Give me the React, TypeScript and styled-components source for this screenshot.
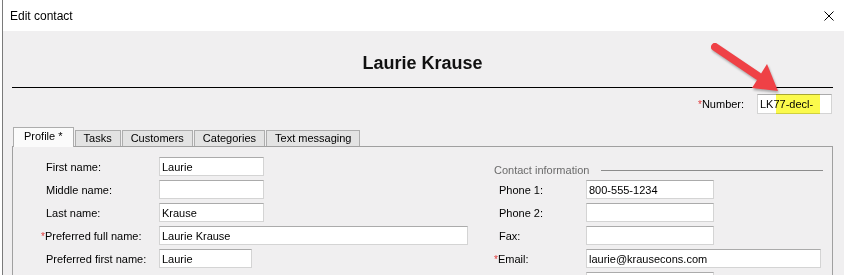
import * as React from 'react';
import styled, { createGlobalStyle } from 'styled-components';

const GlobalStyle = createGlobalStyle`
  html, body {
    margin: 0;
    padding: 0;
    height: 275px;
    overflow: hidden;
    background: #fff;
  }
  body {
    font-family: "Liberation Sans", Arial, sans-serif;
  }
`;

const Window = styled.div`
  position: relative;
  box-sizing: border-box;
  margin-left: 2px;
  width: 842px;
  height: 275px;
  border-left: 1px solid #7a7a7a;
  display: flex;
  flex-direction: column;
  overflow: hidden;
`;

const TitleBar = styled.div`
  height: 31px;
  flex-shrink: 0;
  background: #fff;
  display: flex;
  align-items: center;
  justify-content: space-between;
  padding: 0 10px 0 7px;
  font-size: 12px;
  color: #000;
`;

const Body = styled.div`
  flex: 1;
  min-height: 0;
  background: #f0eff0;
  padding: 0 11px 0 9px;
  display: flex;
  flex-direction: column;
  overflow: hidden;

  & > * {
    flex-shrink: 0;
  }
`;

const Header = styled.div`
  height: 56px;
  box-sizing: border-box;
  padding-top: 8px;
  display: flex;
  align-items: center;
  justify-content: center;
`;

const ContactName = styled.h1`
  margin: 0;
  font-size: 18px;
  line-height: 22px;
  font-weight: bold;
  color: #111;
`;

const Rule = styled.div`
  border-top: 1px solid #000;
`;

const NumberRow = styled.div`
  display: flex;
  justify-content: flex-end;
  align-items: center;
  gap: 12px;
  height: 20px;
  margin-top: 6px;
  margin-right: 1px;
`;

const NumberBox = styled.div`
  position: relative;
  height: 20px;
`;

const Highlight = styled.div`
  position: absolute;
  left: 19px;
  top: 0;
  bottom: 0;
  width: 44px;
  background: #fbfa4c;
  mix-blend-mode: multiply;
  pointer-events: none;
`;

const TabStrip = styled.div`
  position: relative;
  z-index: 1;
  display: flex;
  align-items: flex-end;
  gap: 1px;
  height: 20px;
  margin-top: 13px;
  margin-bottom: -1px;
  padding-left: 1px;
`;

const Tab = styled.div<{ $active?: boolean }>`
  box-sizing: border-box;
  border: 1px solid #adadad;
  border-bottom: none;
  font-size: 11px;
  color: #000;
  white-space: nowrap;
  height: ${(p) => (p.$active ? '20px' : '16px')};
  line-height: ${(p) => (p.$active ? '14px' : '15px')};
  padding: ${(p) => (p.$active ? '1px 10px 0' : '0 8px')};
  margin-bottom: ${(p) => (p.$active ? '0' : '1px')};
  background: ${(p) => (p.$active ? '#fbfbfb' : '#e3e3e3')};
`;

const Panel = styled.div`
  flex: 1 0 auto;
  border: 1px solid #a0a0a0;
  border-bottom: none;
  display: grid;
  grid-template-columns: 448px 1fr;
  align-items: start;
  padding: 10px 0 0 33px;
`;

const Column = styled.div`
  display: flex;
  flex-direction: column;
`;

const SectionHeading = styled.div`
  display: flex;
  align-items: center;
  height: 19px;
  box-sizing: border-box;
  padding-top: 7px;
  margin-bottom: 4px;
  margin-right: 9px;
  font-size: 11px;
  color: #6b6b6b;
`;

const HeadingLine = styled.div`
  flex: 1;
  margin-left: 12px;
  border-top: 1px solid #8c8c8c;
`;

const Row = styled.div<{ $indent?: number }>`
  display: flex;
  align-items: center;
  height: 19px;
  margin-bottom: 4px;
  padding-left: ${(p) => p.$indent ?? 0}px;
`;

const Label = styled.label<{ $width: number }>`
  width: ${(p) => p.$width}px;
  flex-shrink: 0;
  font-size: 11px;
  color: #000;
  white-space: nowrap;
`;

const Required = styled.span`
  color: #e03a3a;
  margin-left: -5px;
  font-size: 10px;
`;

const TextBox = styled.input<{ $width: number }>`
  box-sizing: border-box;
  width: ${(p) => p.$width}px;
  height: 19px;
  margin: 0;
  padding: 0 2px;
  border: 1px solid #d4d4d4;
  border-top-color: #ababab;
  background: #fff;
  font-family: "Liberation Sans", Arial, sans-serif;
  font-size: 11px;
  color: #000;
  outline: none;
`;

const NumberInput = styled(TextBox)`
  height: 20px;
`;

const Arrow = styled.svg`
  position: absolute;
  left: 697px;
  top: 38px;
  overflow: visible;
  filter: drop-shadow(1px 2px 1px rgba(0, 0, 0, 0.3));
  pointer-events: none;
`;

const CloseIcon = () => (
  <svg width="10" height="10" viewBox="0 0 10 10">
    <path d="M0.5 0.5 L9.5 9.5 M9.5 0.5 L0.5 9.5" stroke="#000" strokeWidth="1" fill="none" />
  </svg>
);

type Field = { label: string; value: string; width: number; required?: boolean };

const profileFields: Field[] = [
  { label: 'First name:', value: 'Laurie', width: 105 },
  { label: 'Middle name:', value: '', width: 105 },
  { label: 'Last name:', value: 'Krause', width: 105 },
  { label: 'Preferred full name:', value: 'Laurie Krause', width: 309, required: true },
  { label: 'Preferred first name:', value: 'Laurie', width: 93 },
];

const contactFields: Field[] = [
  { label: 'Phone 1:', value: '800-555-1234', width: 128 },
  { label: 'Phone 2:', value: '', width: 128 },
  { label: 'Fax:', value: '', width: 128 },
  { label: 'Email:', value: 'laurie@krausecons.com', width: 235, required: true },
  { label: '', value: '', width: 128 },
];

const tabs = ['Profile *', 'Tasks', 'Customers', 'Categories', 'Text messaging'];

export default function App() {
  return (
    <>
      <GlobalStyle />
      <Window>
        <TitleBar>
          <span>Edit contact</span>
          <CloseIcon />
        </TitleBar>
        <Body>
          <Header>
            <ContactName>Laurie Krause</ContactName>
          </Header>
          <Rule />
          <NumberRow>
            <Label $width={42}>
              <Required>*</Required>Number:
            </Label>
            <NumberBox>
              <NumberInput $width={75} value="LK77-decl-" readOnly />
              <Highlight />
            </NumberBox>
          </NumberRow>
          <TabStrip>
            {tabs.map((t, i) => (
              <Tab key={t} $active={i === 0}>
                {t}
              </Tab>
            ))}
          </TabStrip>
          <Panel>
            <Column>
              {profileFields.map((f) => (
                <Row key={f.label}>
                  <Label $width={113}>
                    {f.required && <Required>*</Required>}
                    {f.label}
                  </Label>
                  <TextBox $width={f.width} value={f.value} readOnly />
                </Row>
              ))}
            </Column>
            <Column>
              <SectionHeading>
                Contact information
                <HeadingLine />
              </SectionHeading>
              {contactFields.map((f, i) => (
                <Row key={i} $indent={5}>
                  <Label $width={87}>
                    {f.required && <Required>*</Required>}
                    {f.label}
                  </Label>
                  <TextBox $width={f.width} value={f.value} readOnly />
                </Row>
              ))}
            </Column>
          </Panel>
        </Body>
        <Arrow width="90" height="60" viewBox="0 0 90 60">
          <line x1="15" y1="9" x2="58" y2="38" stroke="#ef4146" strokeWidth="8" strokeLinecap="round" />
          <polygon points="52,50 67,26 78,53" fill="#ef4146" />
        </Arrow>
      </Window>
    </>
  );
}
